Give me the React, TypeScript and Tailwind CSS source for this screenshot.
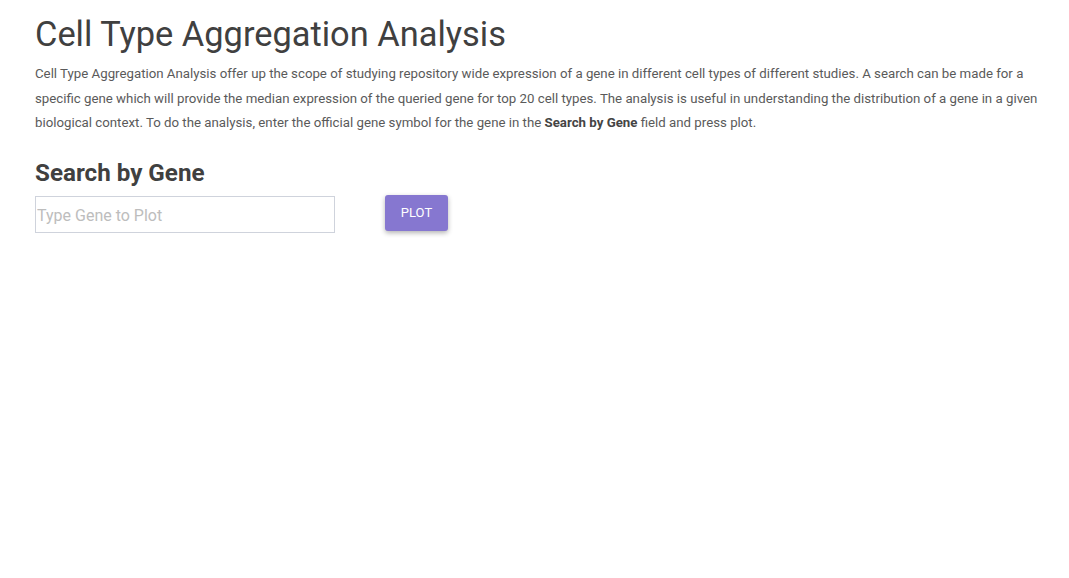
import React from "react";

export default function App() {
  return (
    <div className="min-h-[578px] bg-white pl-[35px] pr-[25px] pt-[12px] text-[#444]" style={{ fontFamily: "Roboto, 'Liberation Sans', sans-serif" }}>
      <h1 className="text-[34.4px] leading-[44px] font-normal text-[#404040]">Cell Type Aggregation Analysis</h1>
      <p className="mt-[6px] text-[13.26px] leading-[24.5px] text-[#5a5a5a]">
        Cell Type Aggregation Analysis offer up the scope of studying repository wide expression of a gene in different cell types of different studies. A search can be made for a specific gene which will provide the median expression of the queried gene for top 20 cell types. The analysis is useful in understanding the distribution of a gene in a given biological context. To do the analysis, enter the official gene symbol for the gene in the <b className="font-bold text-[#444]">Search by Gene</b> field and press plot.
      </p>
      <h2 className="mt-[22px] text-[24.2px] leading-[30px] font-bold text-[#404040]">Search by Gene</h2>
      <div className="mt-[8px] flex items-center gap-[50px]">
        <input
          type="text"
          placeholder="Type Gene to Plot"
          className="h-[37px] w-[300px] border border-[#cfd3dc] bg-white px-[1px] pt-[2px] text-[16px] text-[#333] placeholder:text-[#bdbdbd] outline-none"
        />
        <button className="h-[36px] w-[63px] -mt-[3px] rounded-[3px] bg-[#8677d0] text-[13px] text-white shadow-[0_2px_5px_rgba(0,0,0,0.3)]">
          PLOT
        </button>
      </div>
    </div>
  );
}
